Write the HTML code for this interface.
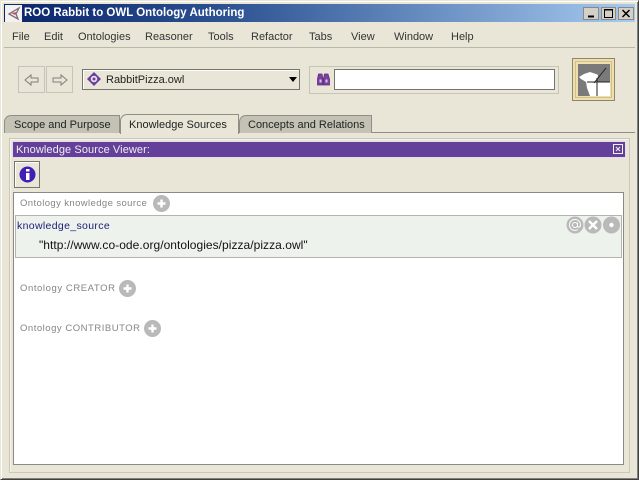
<!DOCTYPE html>
<html><head><meta charset="utf-8"><style>
html,body{margin:0;padding:0;background:#e9e6d8}
body{width:639px;height:480px;position:relative;overflow:hidden;font-family:"Liberation Sans",sans-serif;font-size:11px;color:#222}
.a{position:absolute;box-sizing:border-box}
.t{position:absolute;white-space:nowrap;line-height:14px}
.g{color:#858585;font-size:9.5px}
.m{top:30px;font-size:11px;color:#333}
.tab{position:absolute;box-sizing:border-box;border:1px solid #8f8f86;border-bottom:none;border-radius:7px 0 0 0;font-size:11px;line-height:18px;padding-left:8px;color:#222}
</style></head><body>
<div class="a" style="left:0;top:0;width:639px;height:480px;border:1px solid;border-color:#e9e6d8 #404040 #404040 #e9e6d8;box-shadow:inset 1px 1px 0 #fff,inset -1px -1px 0 #808080"></div>
<div class="a" style="left:4px;top:4px;width:631px;height:18px;background:linear-gradient(90deg,#0a246a 0%,#2c5292 35%,#a6caf0 100%)"></div>
<svg class="a" style="left:5px;top:5px" width="17" height="17" viewBox="0 0 17 17"><rect width="17" height="17" fill="#f4f2ee"/><path d="M14 3L4 9l9 5-2-5z" fill="none" stroke="#7d6a78" stroke-width="1.3"/><path d="M6 8l6-1-2 3z" fill="#b45a6a"/></svg>
<div class="t" style="left:24px;top:6px;color:#fff;font-weight:bold;font-size:11.5px">ROO Rabbit to OWL Ontology Authoring</div>
<svg class="a" style="left:583px;top:7px" width="51" height="13" viewBox="0 0 51 13"><g fill="#d4d0c8" stroke="#8a8a84"><rect x=".5" y=".5" width="15" height="12"/><rect x="18.500" y=".5" width="14" height="12"/><rect x="35.500" y=".5" width="15" height="12"/></g><path d="M5 8.500h6v2H5z" fill="#000"/><path d="M21.500 2.500h8v8h-8z" fill="none" stroke="#000"/><path d="M21 2h9v1.500h-9z" fill="#000"/><path d="M39.500 3l7 7m0-7l-7 7" stroke="#000" stroke-width="1.500"/></svg>
<div class="t m" style="left:12px">File</div><div class="t m" style="left:44px">Edit</div><div class="t m" style="left:78px">Ontologies</div><div class="t m" style="left:145px">Reasoner</div><div class="t m" style="left:208px">Tools</div><div class="t m" style="left:251px">Refactor</div><div class="t m" style="left:309px">Tabs</div><div class="t m" style="left:351px">View</div><div class="t m" style="left:394px">Window</div><div class="t m" style="left:451px">Help</div>
<div class="a" style="left:4px;top:47px;width:631px;height:1px;background:#b9b7a8"></div>

<div class="a" style="left:18px;top:66px;width:27px;height:27px;border:1px solid #c6c4b6"></div>
<div class="a" style="left:46px;top:66px;width:27px;height:27px;border:1px solid #c6c4b6"></div>
<svg class="a" style="left:24px;top:73px" width="44" height="14" viewBox="0 0 44 14"><path d="M1 7l6-5v3h7v4H7v3z" fill="#e8e6dc" stroke="#808078"/><path d="M43 7l-6-5v3h-8v4h8v3z" fill="#e8e6dc" stroke="#808078"/></svg>
<div class="a" style="left:82px;top:69px;width:218px;height:21px;border:1px solid #75756c;box-shadow:inset 1px 1px 0 #fff"></div>
<svg class="a" style="left:86px;top:71px" width="16" height="16" viewBox="0 0 16 16"><path d="M8 1l7 7-7 7-7-7z" fill="#6a3f9c"/><circle cx="8" cy="8" r="3.200" fill="#e9e4ee"/><circle cx="8" cy="8" r="1.500" fill="#6a3f9c"/></svg>
<div class="t" style="left:106px;top:73px;font-size:11px">RabbitPizza.owl</div>
<svg class="a" style="left:288px;top:77px" width="10" height="6" viewBox="0 0 10 6"><path d="M1 0h8L5 5z" fill="#000"/></svg>
<div class="a" style="left:309px;top:66px;width:250px;height:28px;border:1px solid #c6c4b6"></div>
<svg class="a" style="left:317px;top:73px" width="13" height="13" viewBox="0 0 13 13"><path d="M.5 12V6l1-5h3.500l1 5v6zM6.500 12V6l1-5H11l1.500 5v6z" fill="#7b3f9c" stroke="#5e2f80" stroke-width=".8"/><path d="M2.500 6.500h2v3h-2zM8.500 6.500h2v3h-2z" fill="#d9c8e6"/></svg>
<div class="a" style="left:334px;top:69px;width:221px;height:21px;background:#fff;border:1px solid #75756c"></div>

<div class="a" style="left:572px;top:58px;width:43px;height:43px;background:#f0dfae;border:1px solid #8c866c"></div>
<div class="a" style="left:575px;top:61px;width:37px;height:37px;border:1px solid #cfc08f"></div>
<svg class="a" style="left:578px;top:64px" width="32" height="32" viewBox="0 0 32 32"><rect width="32" height="32" fill="#7a7a7a"/><path d="M1 13l5-3 6-2 6 2 2 1-1 7h13v14H12l-3-8-1-6-5-3z" fill="#fff"/><path d="M28 4L16 19M9 18h23M19 14v18" stroke="#222" stroke-width="1" fill="none"/></svg>

<div class="a" style="left:4px;top:132px;width:631px;height:1px;background:#8f8f86"></div>
<div class="tab" style="left:4px;top:115px;width:116px;height:18px;background:#c4c2b4;color:#222;padding-left:9px">Scope and Purpose</div>
<div class="tab" style="left:239px;top:115px;width:133px;height:18px;background:#c4c2b4">Concepts and Relations</div>
<div class="tab" style="left:120px;top:114px;width:119px;height:20px;background:#e9e6d8;line-height:20px;border-right:1px solid #8f8f86">Knowledge Sources</div>

<div class="a" style="left:9px;top:138px;width:621px;height:335px;border:1px solid #c9c7b8;box-shadow:inset 1px 1px 0 #f5f3ea"></div>
<div class="a" style="left:12px;top:141px;width:614px;height:17px;border:1px solid #e6dcec"></div>
<div class="a" style="left:13px;top:142px;width:612px;height:15px;background:#65409a"></div>
<div class="t" style="left:16px;top:143px;color:#eee;font-size:11px;letter-spacing:.09px">Knowledge Source Viewer:</div>
<svg class="a" style="left:613px;top:144px" width="10" height="10" viewBox="0 0 10 10"><rect x=".5" y=".5" width="9" height="9" fill="none" stroke="#f0f0f0"/><path d="M3 3l4 4m0-4L3 7" stroke="#f0f0f0"/></svg>
<div class="a" style="left:14px;top:161px;width:26px;height:27px;border:1px solid #75756c;box-shadow:inset 1px 1px 0 #fff"></div>
<svg class="a" style="left:19px;top:166px" width="17" height="17" viewBox="0 0 17 17"><circle cx="8.500" cy="8.500" r="8" fill="#3f1fb5"/><rect x="7" y="3" width="3.500" height="2.500" fill="#fff"/><rect x="7" y="7" width="3.500" height="7" fill="#fff"/></svg>

<div class="a" style="left:13px;top:192px;width:611px;height:273px;background:#fff;border:1px solid #8b8b84"></div>
<div class="t g" style="left:20px;top:197px;letter-spacing:.4px">Ontology knowledge source</div>
<svg class="a" style="left:153px;top:195px" width="17" height="17" viewBox="0 0 17 17"><circle cx="8.500" cy="8.500" r="8.500" fill="#b9b9b9"/><path d="M8.500 4.500v8M4.500 8.500h8" stroke="#fff" stroke-width="2.400"/></svg>
<div class="a" style="left:15px;top:215px;width:607px;height:43px;background:#edf2ec;border:1px solid #b4b4ae"></div>
<div class="t" style="left:17px;top:219px;color:#1c1c78;font-size:10.500px;letter-spacing:.34px">knowledge_source</div>
<div class="t" style="left:39px;top:238px;color:#111;font-size:12px;letter-spacing:.04px">"http://www.co-ode.org/ontologies/pizza/pizza.owl"</div>
<svg class="a" style="left:566px;top:216px" width="56" height="18" viewBox="0 0 56 18"><circle cx="9" cy="9" r="8.500" fill="#b9b9b9"/><circle cx="27" cy="9" r="8.500" fill="#b9b9b9"/><circle cx="45.500" cy="9" r="8.500" fill="#b9b9b9"/><circle cx="9" cy="9" r="2.500" fill="none" stroke="#fff"/><path d="M11.500 6.500v3.500c0 2 3 1.500 3-1a5.500 5.500 0 1 0-2.500 4.500" fill="none" stroke="#fff"/><path d="M23 5l8 8m0-8l-8 8" stroke="#fff" stroke-width="2.400"/><circle cx="45.500" cy="9" r="2.200" fill="#fff"/></svg>
<div class="t g" style="left:20px;top:282px;letter-spacing:.58px">Ontology CREATOR</div>
<svg class="a" style="left:119px;top:280px" width="17" height="17" viewBox="0 0 17 17"><circle cx="8.500" cy="8.500" r="8.500" fill="#b9b9b9"/><path d="M8.500 4.500v8M4.500 8.500h8" stroke="#fff" stroke-width="2.400"/></svg>
<div class="t g" style="left:20px;top:322px;letter-spacing:.52px">Ontology CONTRIBUTOR</div>
<svg class="a" style="left:144px;top:320px" width="17" height="17" viewBox="0 0 17 17"><circle cx="8.500" cy="8.500" r="8.500" fill="#b9b9b9"/><path d="M8.500 4.500v8M4.500 8.500h8" stroke="#fff" stroke-width="2.400"/></svg>
</body></html>
